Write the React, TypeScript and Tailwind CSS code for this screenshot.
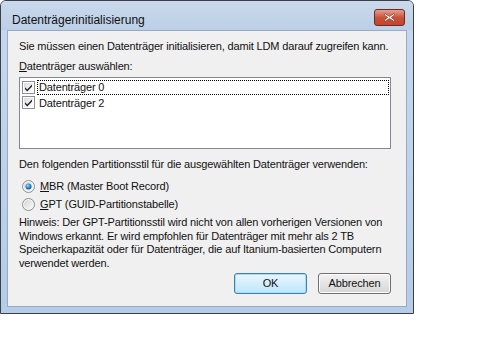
import React from "react";

// Win7-Dialog: Datenträgerinitialisierung
const font = { fontFamily: '"Liberation Sans", Arial, sans-serif' };

function CheckBox() {
  return (
    <svg width="13" height="13" viewBox="0 0 13 13" className="shrink-0">
      <defs>
        <linearGradient id="cb" x1="0" y1="0" x2="1" y2="1">
          <stop offset="0" stopColor="#dcdcdc" />
          <stop offset="1" stopColor="#ffffff" />
        </linearGradient>
      </defs>
      <rect x="0.5" y="0.5" width="12" height="12" fill="#fff" stroke="#8e8f8f" />
      <rect x="2" y="2" width="9" height="9" fill="url(#cb)" />
      <path d="M3 6.2 L5.2 8.6 L10 3.6 L10 5.4 L5.2 10.4 L3 8 Z" fill="#1c1c1c" />
    </svg>
  );
}

function Radio({ checked }: { checked?: boolean }) {
  return (
    <svg width="13" height="13" viewBox="0 0 13 13" className="shrink-0">
      <defs>
        <linearGradient id="rb" x1="0" y1="0" x2="1" y2="1">
          <stop offset="0" stopColor="#d4d4d4" />
          <stop offset="1" stopColor="#fafafa" />
        </linearGradient>
        <radialGradient id="rd" cx="0.4" cy="0.35" r="0.7">
          <stop offset="0" stopColor="#a6e0f8" />
          <stop offset="0.5" stopColor="#2a8fd0" />
          <stop offset="1" stopColor="#0d4f8a" />
        </radialGradient>
      </defs>
      <circle cx="6.5" cy="6.5" r="6" fill="#f4f4f4" stroke="#8e8f8f" />
      <circle cx="6.5" cy="6.5" r="4.5" fill="url(#rb)" />
      {checked && <circle cx="6.5" cy="6.5" r="3" fill="url(#rd)" />}
    </svg>
  );
}

export default function App() {
  return (
    <div className="w-[480px] h-[360px] bg-white text-[11px] tracking-[-0.15px] text-[#111] whitespace-nowrap" style={font}>
      <div className="w-[414px] h-[314px] flex flex-col border border-[#3a3f48] rounded-t-[6px] overflow-hidden bg-gradient-to-b from-[#c6d8ee] to-[#b4cce8]">
        {/* Titelleiste */}
        <div className="h-[29px] flex items-center justify-between pl-[11px] pr-[8px] bg-gradient-to-b from-[#cad9ec] to-[#bccfe6]">
          <span className="text-[12px] tracking-[0px] text-[#101010] leading-[14px] mt-[8px]">Datenträgerinitialisierung</span>
          <div className="w-[31px] h-[17px] mt-[4px] rounded-[3px] border border-[#6b2a22] bg-gradient-to-b from-[#e5a08e] via-[#c9523b] to-[#c5432c] flex items-center justify-center">
            <svg width="11" height="9" viewBox="0 0 11 9">
              <path d="M1 0.5 L5.5 3.6 L10 0.5 L10.6 2 L7.3 4.5 L10.6 7 L10 8.5 L5.5 5.4 L1 8.5 L0.4 7 L3.7 4.5 L0.4 2 Z" fill="#fff" stroke="#6b2a22" strokeWidth="0.6" />
            </svg>
          </div>
        </div>

        {/* Rahmen + Client */}
        <div className="flex-1 px-[6px] pb-[6px]">
          <div className="h-full bg-[#f0f0f0] border border-[#97aac4] flex flex-col pl-[11px] pr-[15px] pt-[8px] leading-[14px]">
            <p>Sie müssen einen Datenträger initialisieren, damit LDM darauf zugreifen kann.</p>
            <p className="mt-[6px]">
              <span className="underline">D</span>atenträger auswählen:
            </p>
            <div className="mt-[4px] h-[72px] bg-white border border-[#828790] pt-[2px] pl-[2px] pr-[1px]">
              <div className="flex items-center gap-[2px] h-[15px]">
                <CheckBox />
                <span className="flex-1 h-[15px] leading-[13px] pl-[1px] border border-dotted border-black">Datenträger 0</span>
              </div>
              <div className="flex items-center gap-[2px] h-[15px]">
                <CheckBox />
                <span className="flex-1 pl-[2px]">Datenträger 2</span>
              </div>
            </div>
            <p className="mt-[8px]">Den folgenden Partitionsstil für die ausgewählten Datenträger verwenden:</p>
            <div className="mt-[6px] flex items-center gap-[5px] h-[18px] pl-[3px]">
              <Radio checked />
              <span>
                <span className="underline">M</span>BR (Master Boot Record)
              </span>
            </div>
            <div className="flex items-center gap-[5px] h-[18px] pl-[3px]">
              <Radio />
              <span>
                <span className="underline">G</span>PT (GUID-Partitionstabelle)
              </span>
            </div>
            <p className="mt-[3px] leading-[13.7px]">
              Hinweis: Der GPT-Partitionsstil wird nicht von allen vorherigen Versionen von
              <br />
              Windows erkannt. Er wird empfohlen für Datenträger mit mehr als 2 TB
              <br />
              Speicherkapazität oder für Datenträger, die auf Itanium-basierten Computern
              <br />
              verwendet werden.
            </p>
            <div className="mt-[2px] flex justify-end gap-[11px]">
              <button className="w-[73px] h-[21px] rounded-[3px] border border-[#3c7fb1] bg-gradient-to-b from-[#eaf6fd] to-[#bee6fd] shadow-[inset_0_0_0_1px_#a8dcf7]">
                OK
              </button>
              <button className="w-[73px] h-[21px] rounded-[3px] border border-[#707070] bg-gradient-to-b from-[#f2f2f2] to-[#d6d6d6] shadow-[inset_0_0_0_1px_#fcfcfc]">
                Abbrechen
              </button>
            </div>
          </div>
        </div>
      </div>
    </div>
  );
}
